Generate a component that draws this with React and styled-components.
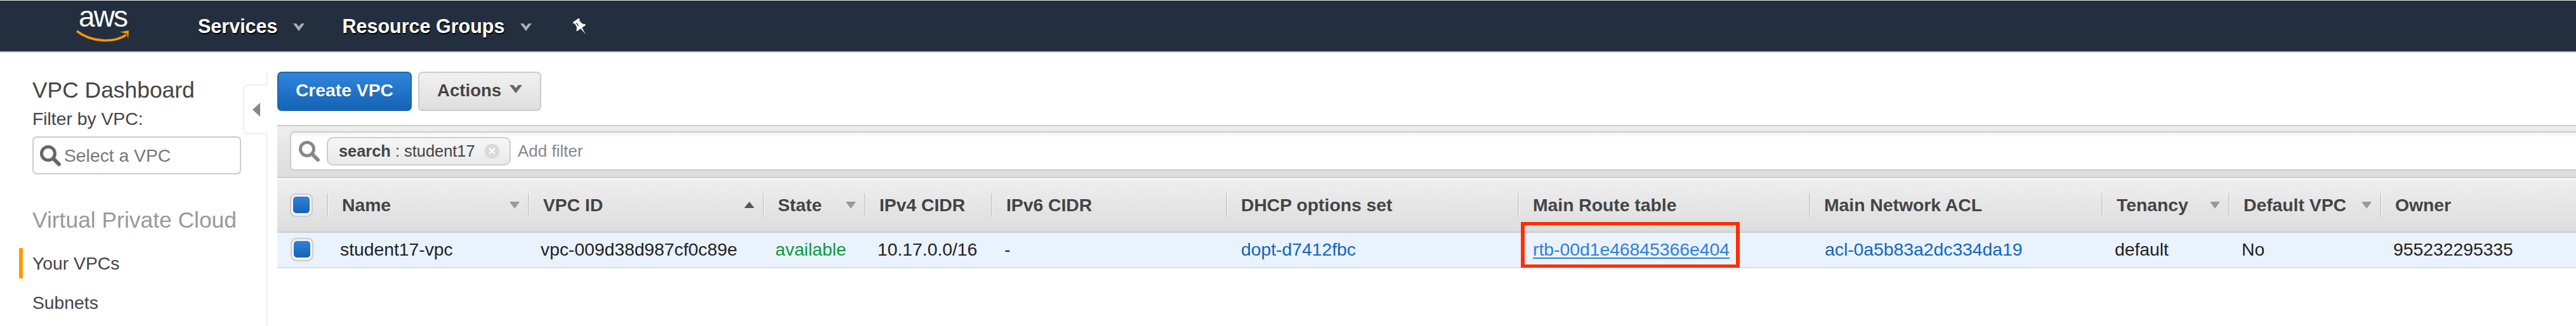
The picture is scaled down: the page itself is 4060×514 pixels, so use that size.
import React from 'react';
import styled, { createGlobalStyle } from 'styled-components';

const Global = createGlobalStyle`
  html, body { margin: 0; padding: 0; background: #fff; }
  body { font-family: "Liberation Sans", Arial, sans-serif; }
  * { box-sizing: border-box; }
`;

const Page = styled.div`
  width: 4060px;
  height: 514px;
  overflow: hidden;
  display: flex;
  flex-direction: column;
  border-top: 1px solid #e8e8e8;
`;

const Nav = styled.header`
  height: 82px;
  flex: none;
  background: #232f3e;
  border-bottom: 2px solid #ccc;
  display: flex;
  align-items: center;
  padding-left: 120px;
`;

const Logo = styled.div`
  width: 84px;
  height: 80px;
  margin-right: 108px;
  display: flex;
  flex-direction: column;
  align-items: center;
`;

const LogoWord = styled.span`
  font-size: 46px;
  line-height: 46px;
  margin-top: 2px;
  letter-spacing: -2px;
  color: #fff;
`;

const Smile = styled.svg`
  width: 84px;
  height: 20px;
  margin-top: -2px;
`;

const NavItem = styled.div`
  display: flex;
  align-items: center;
  color: #fff;
  font-size: 30.5px;
  font-weight: 700;
  text-shadow: 1px 2px 1px #000;
  margin-right: ${p => p.$mr}px;
`;

const NavChevron = styled.svg`
  width: 18px;
  height: 12px;
  margin-left: ${p => p.$ml}px;
  margin-top: 4px;
`;

const PinIcon = styled.svg`
  width: 25px;
  height: 28px;
  flex: none;
  margin-left: -2px;
  margin-top: 1px;
`;

const Body = styled.div`
  flex: 1;
  display: flex;
  min-height: 0;
`;

const Sidebar = styled.aside`
  width: 422px;
  flex: none;
  position: relative;
  margin-top: 30px;
  padding-top: 9px;
  border-right: 2px solid #eee;
`;

const SideTitle = styled.h2`
  margin: 0 0 0 51px;
  font-size: 35.4px;
  line-height: 40px;
  font-weight: 400;
  color: #444;
`;

const FilterLabel = styled.div`
  margin: 8px 0 0 51px;
  font-size: 28.3px;
  line-height: 34px;
  color: #444;
`;

const VpcSelect = styled.div`
  margin: 11px 0 0 51px;
  width: 329px;
  height: 60px;
  border: 2px solid #ccc;
  border-radius: 7px;
  display: flex;
  align-items: center;
  padding: 0 0 0 9px;
  gap: 4px;
`;

const Placeholder = styled.span`
  font-size: 28.3px;
  color: #777;
`;

const SearchIcon = styled.svg`
  width: 35px;
  height: 33px;
  flex: none;
`;

const SideGroup = styled.h3`
  margin: 52px 0 0 51px;
  font-size: 35.4px;
  line-height: 40px;
  font-weight: 400;
  color: #999;
`;

const SideLink = styled.div`
  height: 48px;
  display: flex;
  align-items: center;
  margin: ${p => p.$mt}px 0 0 30px;
  padding-left: ${p => (p.$active ? 15 : 21)}px;
  border-left: ${p => (p.$active ? '6px solid #f90' : 'none')};
  font-size: 28.3px;
  color: #444;
`;

const CollapseTab = styled.div`
  position: absolute;
  left: 383px;
  top: 20px;
  width: 39px;
  height: 79px;
  background: #fff;
  border: 2px solid #eee;
  border-right: none;
  border-radius: 8px 0 0 8px;
  display: flex;
  align-items: center;
  padding-left: 13px;
`;

const CollapseArrow = styled.span`
  width: 0;
  height: 0;
  border-style: solid;
  border-width: 11px 12px 11px 0;
  border-color: transparent #888 transparent transparent;
`;

const Main = styled.main`
  flex: 1;
  min-width: 0;
  margin-left: 15px;
  padding-top: 30px;
`;

const Toolbar = styled.div`
  display: flex;
  gap: 10px;
  height: 62px;
`;

const PrimaryButton = styled.div`
  width: 212px;
  border: 2px solid #1a66b3;
  border-radius: 7px;
  background: linear-gradient(#3085dc, #1463b5);
  color: #fff;
  font-size: 28.3px;
  font-weight: 700;
  display: flex;
  align-items: center;
  justify-content: center;
  padding-bottom: 3px;
  text-shadow: 0 1px 1px rgba(0, 0, 0, 0.3);
`;

const SecondaryButton = styled.div`
  width: 194px;
  border: 2px solid #ccc;
  border-radius: 7px;
  background: linear-gradient(#f1f1f1, #dedede);
  color: #444;
  font-size: 27.6px;
  font-weight: 700;
  display: flex;
  align-items: center;
  padding: 0 0 3px 28px;
  gap: 13px;
  text-shadow: 0 1px 0 #fff;
`;

const ActionsChevron = styled.svg`
  width: 20px;
  height: 13px;
  margin-top: -4px;
`;

const FilterBar = styled.div`
  margin-top: 22px;
  height: 84px;
  border-top: 2px solid #ccc;
  border-bottom: 2px solid #ccc;
  background: linear-gradient(#ededed, #dddddd);
  padding: 8px 0 0 20px;
`;

const FilterInput = styled.div`
  height: 62px;
  margin-right: -20px;
  background: #fff;
  border: 2px solid #ccc;
  border-radius: 7px;
  box-shadow: inset 0 9px 7px -6px rgba(0, 0, 0, 0.07);
  display: flex;
  align-items: center;
  padding-left: 11px;
`;

const Chip = styled.div`
  width: 290px;
  height: 45px;
  margin-left: 10px;
  margin-right: 11px;
  border: 2px solid #ccc;
  border-radius: 10px;
  background: linear-gradient(#f6f6f6, #e9e9e9);
  color: #444;
  font-size: 25.4px;
  display: flex;
  align-items: center;
  padding-left: 17px;
  white-space: pre;
`;

const ChipKey = styled.b`
  font-weight: 700;
`;

const ChipClose = styled.span`
  width: 23px;
  height: 23px;
  margin-left: 15px;
  border-radius: 50%;
  background: #d9d9d9;
  color: #fff;
  font-size: 20px;
  font-weight: 700;
  line-height: 23px;
  text-align: center;
`;

const AddFilter = styled.span`
  font-size: 26px;
  color: #888;
`;

const COLUMNS = '78px 317px 370px 160px 200px 370px 460px 459px 461px 200px 239px 309px';

const Table = styled.div`
  margin-top: 2px;
`;

const HeadRow = styled.div`
  display: grid;
  grid-template-columns: ${COLUMNS};
  align-items: center;
  height: 84px;
  padding-bottom: 2px;
  border-bottom: 2px solid #ccc;
  background: linear-gradient(#eeeeee, #dddddd);
`;

const HeadCell = styled.div`
  height: 36px;
  display: flex;
  align-items: center;
  justify-content: space-between;
  padding: 0 13px 0 22px;
  border-left: 2px solid #cfcfcf;
  box-shadow: inset 1px 0 0 #f7f7f7;
  font-size: 28.3px;
  font-weight: 700;
  color: #444;
  white-space: nowrap;
`;

const SortArrow = styled.span`
  width: 0;
  height: 0;
  border-left: 8px solid transparent;
  border-right: 8px solid transparent;
  ${p => (p.$up ? 'border-bottom: 10px solid #555;' : 'border-top: 11px solid #999;')}
`;

const CheckCell = styled.div`
  padding-left: ${p => p.$pl}px;
  display: flex;
  align-items: center;
`;

const Checkbox = styled.span`
  width: 36px;
  height: 37px;
  border: 2px solid #ccc;
  border-radius: 9px;
  background: #f1f1f1;
  display: flex;
  align-items: center;
  justify-content: center;
`;

const CheckFill = styled.span`
  width: 26px;
  height: 26px;
  border-radius: 5px;
  background: linear-gradient(#2f82d9, #1463b5);
`;

const DataRow = styled.div`
  display: grid;
  grid-template-columns: ${COLUMNS};
  align-items: center;
  height: 56px;
  padding-bottom: 2px;
  background: #eaf2fd;
  border-bottom: 2px solid #ddd;
`;

const Cell = styled.div`
  padding-left: ${p => p.$pl ?? 21}px;
  font-size: 28.3px;
  color: ${p => p.$color || '#222'};
  white-space: nowrap;
  position: relative;
`;

const RouteLink = styled.span`
  color: #2f80d8;
  text-decoration: underline;
  text-decoration-thickness: 2px;
  text-underline-offset: 3px;
`;

const Highlight = styled.span`
  position: absolute;
  left: 5px;
  top: -27px;
  width: 345px;
  height: 72px;
  border: 5px solid #ff2d00;
  border-left-width: 6px;
  border-right-width: 6px;
  pointer-events: none;
`;

const Magnifier = ({ color }) => (
  <SearchIcon viewBox="0 0 35 33">
    <circle cx="14" cy="13" r="10.5" fill="none" stroke={color} strokeWidth="5" />
    <path d="M22 21l9 9" stroke={color} strokeWidth="6" strokeLinecap="round" />
  </SearchIcon>
);

const Chevron = ({ ml }) => (
  <NavChevron $ml={ml} viewBox="0 0 18 12">
    <path d="M0 0l5 0 4 5 4-5 5 0-9 12z" fill="#a9aeb4" />
  </NavChevron>
);

const head = [
  ['Name', 'down'], ['VPC ID', 'up'], ['State', 'down'], ['IPv4 CIDR'], ['IPv6 CIDR'],
  ['DHCP options set'], ['Main Route table'], ['Main Network ACL'],
  ['Tenancy', 'down'], ['Default VPC', 'down'], ['Owner'],
];

export default function App() {
  return (
    <Page>
      <Global />
      <Nav>
        <Logo>
          <LogoWord>aws</LogoWord>
          <Smile viewBox="0 0 84 20">
            <path d="M1 2C24 20 60 21 79 8" fill="none" stroke="#f90" strokeWidth="3.6" />
            <path d="M69 3.5L83 1 82 15 80 6z" fill="#f90" />
          </Smile>
        </Logo>
        <NavItem $mr={60}>Services<Chevron ml={24} /></NavItem>
        <NavItem $mr={63}>Resource Groups<Chevron ml={25} /></NavItem>
        <PinIcon viewBox="0 0 25 28">
          <g transform="translate(10 6) rotate(-35) scale(0.85)">
            <path d="M-7 -3h14v3l-2 1 1 8 4 4v2h-20v-2l4-4 1-8-2-1z" fill="#fff" />
            <path d="M-1.4 15h2.8l-1.4 14z" fill="#fff" />
            <path d="M-2.8 1.5h1.6v7h-1.6z" fill="#232f3e" />
          </g>
        </PinIcon>
      </Nav>
      <Body>
        <Sidebar>
          <SideTitle>VPC Dashboard</SideTitle>
          <FilterLabel>Filter by VPC:</FilterLabel>
          <VpcSelect>
            <Magnifier color="#666" />
            <Placeholder>Select a VPC</Placeholder>
          </VpcSelect>
          <SideGroup>Virtual Private Cloud</SideGroup>
          <SideLink $active $mt={24}>Your VPCs</SideLink>
          <SideLink $mt={14}>Subnets</SideLink>
          <CollapseTab><CollapseArrow /></CollapseTab>
        </Sidebar>
        <Main>
          <Toolbar>
            <PrimaryButton>Create VPC</PrimaryButton>
            <SecondaryButton>
              Actions
              <ActionsChevron viewBox="0 0 20 13">
                <path d="M0 0l6 0 4 5 4-5 6 0-10 13z" fill="#666" />
              </ActionsChevron>
            </SecondaryButton>
          </Toolbar>
          <FilterBar>
            <FilterInput>
              <Magnifier color="#888" />
              <Chip>
                <ChipKey>search</ChipKey> : student17
                <ChipClose>×</ChipClose>
              </Chip>
              <AddFilter>Add filter</AddFilter>
            </FilterInput>
          </FilterBar>
          <Table>
            <HeadRow>
              <CheckCell $pl={20}>
                <Checkbox><CheckFill /></Checkbox>
              </CheckCell>
              {head.map(([label, sort]) => (
                <HeadCell key={label}>
                  {label}
                  {sort && <SortArrow $up={sort === 'up'} />}
                </HeadCell>
              ))}
            </HeadRow>
            <DataRow>
              <CheckCell $pl={21}>
                <Checkbox><CheckFill /></Checkbox>
              </CheckCell>
              <Cell $pl={21}>student17-vpc</Cell>
              <Cell $pl={20}>vpc-009d38d987cf0c89e</Cell>
              <Cell $color="#0a9a3c" $pl={20}>available</Cell>
              <Cell>10.17.0.0/16</Cell>
              <Cell>-</Cell>
              <Cell $color="#1166bb" $pl={24}>dopt-d7412fbc</Cell>
              <Cell $pl={24}>
                <RouteLink>rtb-00d1e46845366e404</RouteLink>
                <Highlight />
              </Cell>
              <Cell $color="#1166bb" $pl={25}>acl-0a5b83a2dc334da19</Cell>
              <Cell>default</Cell>
              <Cell>No</Cell>
              <Cell>955232295335</Cell>
            </DataRow>
          </Table>
        </Main>
      </Body>
    </Page>
  );
}
